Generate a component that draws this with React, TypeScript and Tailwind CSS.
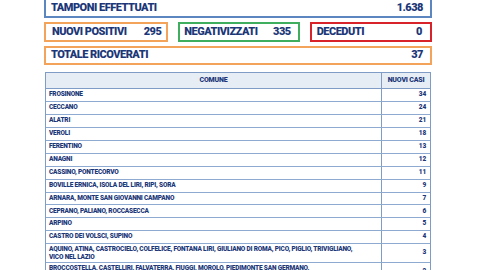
import React from "react";

const rows: [string, string][] = [
  ["FROSINONE", "34"],
  ["CECCANO", "24"],
  ["ALATRI", "21"],
  ["VEROLI", "18"],
  ["FERENTINO", "13"],
  ["ANAGNI", "12"],
  ["CASSINO, PONTECORVO", "11"],
  ["BOVILLE ERNICA, ISOLA DEL LIRI, RIPI, SORA", "9"],
  ["ARNARA, MONTE SAN GIOVANNI CAMPANO", "7"],
  ["CEPRANO, PALIANO, ROCCASECCA", "6"],
  ["ARPINO", "5"],
  ["CASTRO DEI VOLSCI, SUPINO", "4"],
];

export default function App() {
  return (
    <div
      className="w-[480px] h-[270px] overflow-hidden bg-white text-[#1c3778] font-black"
      style={{ fontFamily: "Roboto, Lato, sans-serif" }}
    >
      <div className="ml-[44px] w-[388px] flex flex-col">
        <div className="mt-[-3px] h-[21px] border-2 border-[#5b86c0] flex items-center justify-between pl-[5px] pr-[7px] text-[11px] tracking-[-0.5px]">
          <span className="pt-[2px]">TAMPONI EFFETTUATI</span>
          <span className="pt-[2px]">1.638</span>
        </div>
        <div className="mt-[4px] flex gap-[10px] h-[20px] text-[11px] tracking-[-0.5px]">
          <div className="w-[125px] border-2 border-[#f3a45a] flex items-center justify-between pl-[6px] pr-[5px]">
            <span>NUOVI POSITIVI</span>
            <span>295</span>
          </div>
          <div className="w-[122px] border-2 border-[#3fae5e] flex items-center justify-between pl-[4px] pr-[7px]">
            <span>NEGATIVIZZATI</span>
            <span>335</span>
          </div>
          <div className="w-[123px] border-2 border-[#d8232a] flex items-center justify-between pl-[5px] pr-[8px]">
            <span>DECEDUTI</span>
            <span>0</span>
          </div>
        </div>
        <div className="mt-[4px] h-[19px] border-2 border-[#f3a45a] flex items-center justify-between pl-[5px] pr-[7px] text-[11px] tracking-[-0.5px]">
          <span>TOTALE RICOVERATI</span>
          <span>37</span>
        </div>
        <div className="mt-[7px] ml-[1px] w-[386px] border border-[#7f9cc6] text-[6.5px] tracking-[-0.2px]">
          <div className="flex h-[16px] bg-[#e7edf5] border-b border-[#7f9cc6]">
            <div className="w-[336px] border-r border-[#7f9cc6] flex items-center justify-center text-[7px]">
              COMUNE
            </div>
            <div className="flex-1 flex items-center justify-center text-[7px]">NUOVI CASI</div>
          </div>
          {rows.map(([c, n]) => (
            <div key={c} className="flex h-[12.95px] border-b border-[#8eaad0]">
              <div className="w-[336px] border-r border-[#7f9cc6] flex items-center pl-[3px] whitespace-nowrap">
                {c}
              </div>
              <div className="flex-1 flex items-center justify-end pr-[4px]">{n}</div>
            </div>
          ))}
          <div className="flex h-[19px] border-b border-[#8eaad0]">
            <div className="w-[336px] border-r border-[#7f9cc6] flex flex-col justify-center pl-[3px] leading-[8px] whitespace-nowrap">
              <span>AQUINO, ATINA, CASTROCIELO, COLFELICE, FONTANA LIRI, GIULIANO DI ROMA, PICO, PIGLIO, TRIVIGLIANO,</span>
              <span>VICO NEL LAZIO</span>
            </div>
            <div className="flex-1 flex items-center justify-end pr-[4px]">3</div>
          </div>
          <div className="flex h-[19px] border-b border-[#8eaad0]">
            <div className="w-[336px] border-r border-[#7f9cc6] flex flex-col justify-center pl-[3px] leading-[8px] whitespace-nowrap">
              <span>BROCCOSTELLA, CASTELLIRI, FALVATERRA, FIUGGI, MOROLO, PIEDIMONTE SAN GERMANO,</span>
              <span>SAN DONATO VAL DI COMINO, SANT'ELIA FIUMERAPIDO</span>
            </div>
            <div className="flex-1 flex items-center justify-end pr-[4px]">2</div>
          </div>
        </div>
      </div>
    </div>
  );
}
